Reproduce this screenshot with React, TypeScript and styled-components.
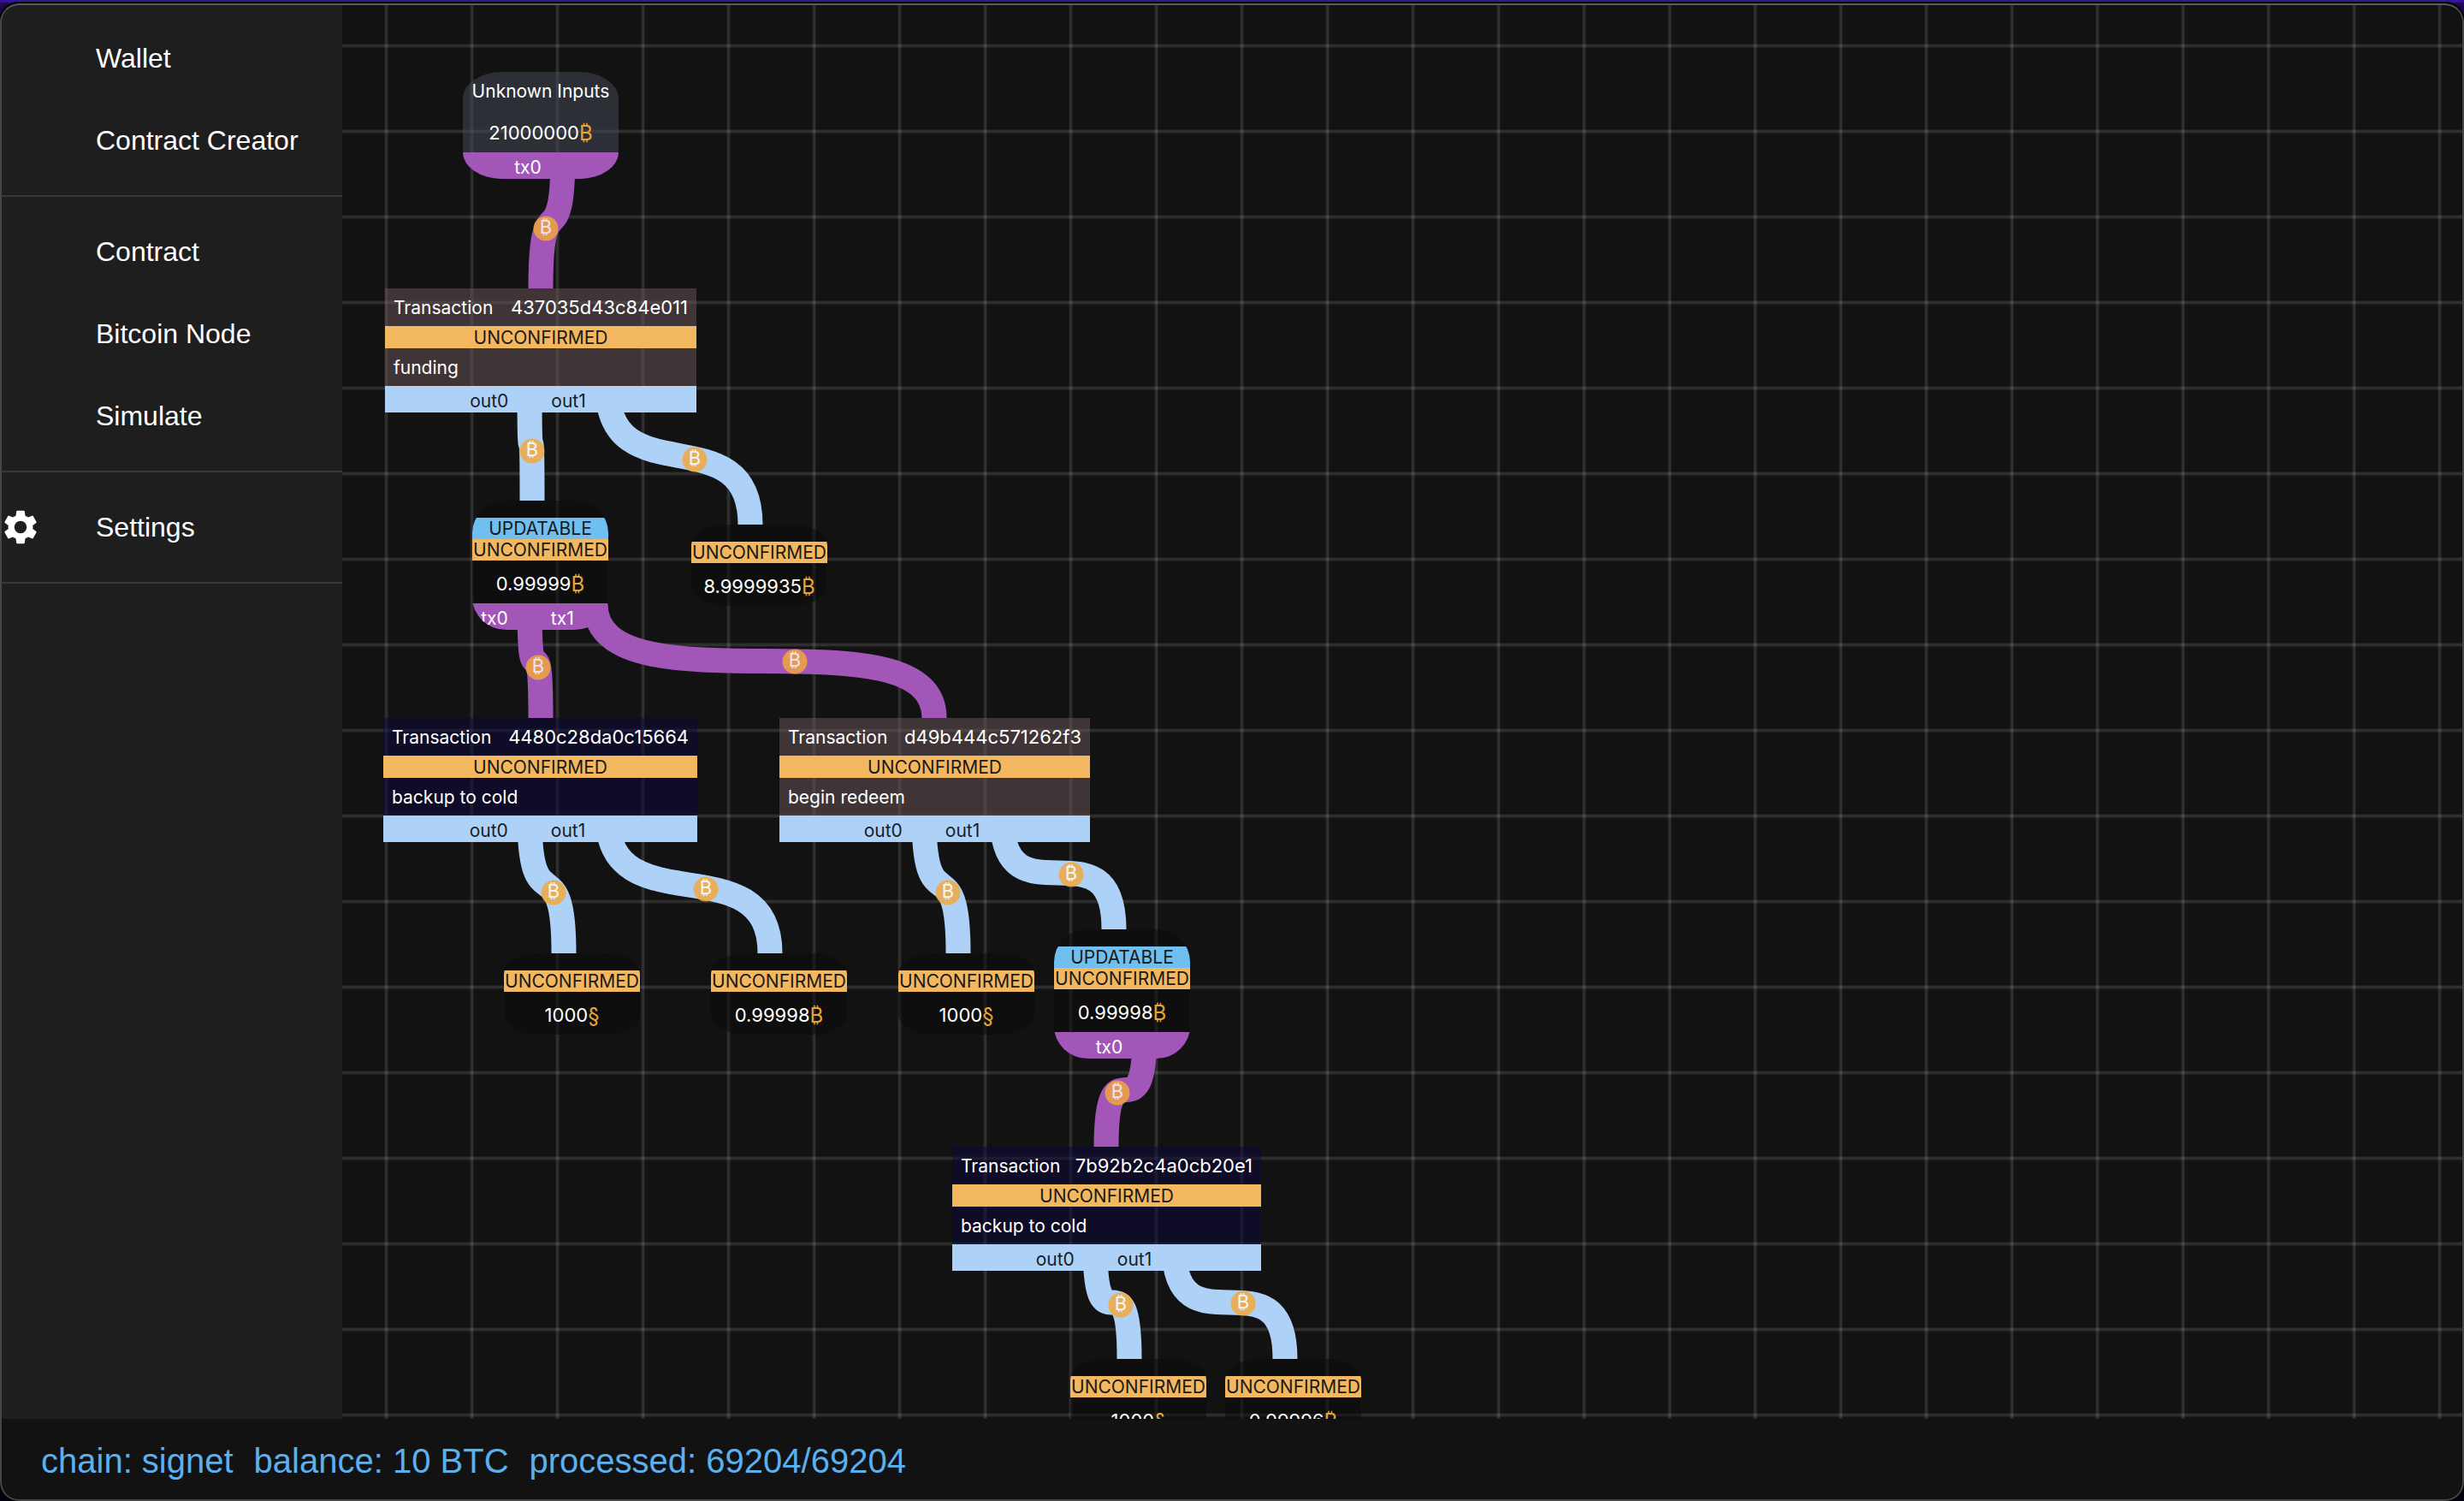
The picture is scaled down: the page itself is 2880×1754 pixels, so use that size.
import React from "react";
import styled, { createGlobalStyle } from "styled-components";
import { MdSettings } from "react-icons/md";

const GlobalStyle = createGlobalStyle`
  *, *::before, *::after { box-sizing: border-box; }
  html, body, #root { height: 100%; }
  body {
    margin: 0;
    overflow: hidden;
    background: linear-gradient(#35149a 0, #35149a 2px, #20084f 4px, #020010 100%);
    font-family: "Liberation Sans", Arial, Helvetica, sans-serif;
  }
`;

const Desktop = styled.div`
  height: 100%;
  padding-top: 4px;
`;

const Window = styled.div`
  position: relative;
  display: flex;
  flex-direction: column;
  height: 100%;
  overflow: hidden;
  border-radius: 22px;
  background: #121212;
  box-shadow: 0 0 0 2px #000;

  &::after {
    content: "";
    position: absolute;
    inset: 0;
    border: 2px solid #464646;
    border-top-color: #5c5c5c;
    border-radius: 22px;
    pointer-events: none;
  }
`;

const Workspace = styled.div`
  display: flex;
  flex: 1;
  min-height: 0;
`;

const Sidebar = styled.nav`
  flex: 0 0 400px;
  background: #1e1e1e;
`;

const NavList = styled.ul`
  margin: 0;
  padding: 16px 0;
  list-style: none;
  border-bottom: 2px solid #383838;
`;

const NavButton = styled.button`
  display: flex;
  align-items: center;
  width: 100%;
  height: 96px;
  padding: 0;
  border: 0;
  background: none;
  color: #fff;
  font: inherit;
  font-size: 32px;
  line-height: 48px;
  text-align: left;
  cursor: pointer;
`;

const NavIcon = styled.span`
  display: flex;
  flex: 0 0 112px;
  font-size: 48px;
`;

const Canvas = styled.main`
  position: relative;
  flex: 1;
  overflow: hidden;
  font-family: Inter, "Noto Sans", sans-serif;
  font-size: 21px;
  line-height: 25px;
  color: #fff;
  background-color: #121212;
  background-image:
    linear-gradient(90deg, #ffffff0c 1px, #ffffff1e 1px 4px, #ffffff0c 4px 5px, transparent 5px),
    linear-gradient(#ffffff0c 1px, #ffffff1e 1px 4px, #ffffff0c 4px 5px, transparent 5px);
  background-size: 100px 100px;
  background-position: 49px 0, 0 47px;
`;

const NodeBox = styled.div<{ $x: number; $y: number; $w: number }>`
  position: absolute;
  left: ${(p) => p.$x}px;
  top: ${(p) => p.$y}px;
  width: ${(p) => p.$w}px;
  white-space: nowrap;
`;

const TransactionBox = styled(NodeBox)<{ $tone: string }>`
  background: ${(p) => p.$tone};
`;

const CoinBox = styled(NodeBox)<{ $tone: string }>`
  overflow: hidden;
  border-radius: 25%;
  background: ${(p) => p.$tone};
`;

const NodeRow = styled.div`
  display: flex;
  align-items: center;
  justify-content: space-between;
  height: 44px;
  padding: 0 10px;
`;

const Hash = styled.span`
  font-size: 22px;
`;

const CoinCap = styled.div`
  display: flex;
  align-items: center;
  justify-content: center;
  min-height: 20px;
`;

const CoinTitle = styled(CoinCap)`
  height: 44px;
`;

const Status = styled.div<{ $kind: "unconfirmed" | "updatable" }>`
  display: flex;
  justify-content: center;
  height: 25px;
  color: #1c1a17;
  background: ${(p) => (p.$kind === "updatable" ? "#70bff1" : "#f3b85f")};
`;

const TransactionStatus = styled(Status)`
  align-items: center;
  height: 26px;
`;

const Amount = styled.div`
  display: flex;
  align-items: center;
  justify-content: center;
  height: 50px;
  padding-top: 4px;
  font-size: 22px;
`;

const Unit = styled.span`
  color: #e6a535;
  font-size: 24px;
`;

const PortBar = styled.div<{ $kind: "in" | "out" }>`
  display: flex;
  align-items: center;
  justify-content: center;
  height: 31px;
  padding-top: 4px;
  color: ${(p) => (p.$kind === "out" ? "#16202a" : "#fff")};
  background: ${(p) => (p.$kind === "out" ? "#aed2f7" : "#a256b8")};
`;

const Port = styled.span`
  flex: none;
  padding: 0 40px 0 10px;
`;

const Links = styled.svg`
  position: absolute;
  inset: 0;
  width: 100%;
  height: 100%;
  pointer-events: none;
`;

const StatusBar = styled.footer`
  display: flex;
  align-items: center;
  gap: 24px;
  height: 96px;
  padding: 2px 48px 0;
  color: #5bb0ee;
  background: #121212;
  font-size: 40px;
  line-height: 48px;
`;

const BROWN = "#6c585a80";
const NAVY = "#0a063c80";
const SLATE = "#464e5a80";
const BLACK = "#0a0a0a80";

interface Transaction {
  x: number;
  y: number;
  w: number;
  hash: string;
  name: string;
  tone: string;
}

interface Coin {
  x: number;
  y: number;
  amount: string;
  unit: string;
  updatable?: boolean;
  spends?: string[];
}

interface Link {
  kind: "in" | "out";
  from: [number, number];
  to: [number, number];
  badge: [number, number];
}

const transactions: Transaction[] = [
  { x: 50, y: 333, w: 364, hash: "437035d43c84e011", name: "funding", tone: BROWN },
  { x: 48, y: 835, w: 367, hash: "4480c28da0c15664", name: "backup to cold", tone: NAVY },
  { x: 511, y: 835, w: 363, hash: "d49b444c571262f3", name: "begin redeem", tone: BROWN },
  { x: 713, y: 1336, w: 361, hash: "7b92b2c4a0cb20e1", name: "backup to cold", tone: NAVY },
];

const coins: Coin[] = [
  { x: 152, y: 581, amount: "0.99999", unit: "₿", updatable: true, spends: ["tx0", "tx1"] },
  { x: 408, y: 609, amount: "8.9999935", unit: "₿" },
  { x: 189, y: 1110, amount: "1000", unit: "§" },
  { x: 431, y: 1110, amount: "0.99998", unit: "₿" },
  { x: 650, y: 1110, amount: "1000", unit: "§" },
  { x: 832, y: 1082, amount: "0.99998", unit: "₿", updatable: true, spends: ["tx0"] },
  { x: 851, y: 1584, amount: "1000", unit: "§" },
  { x: 1032, y: 1584, amount: "0.99996", unit: "₿" },
];

const links: Link[] = [
  { kind: "in", from: [258, 175], to: [232, 333], badge: [238, 263] },
  { kind: "out", from: [219, 448], to: [222, 581], badge: [222, 523] },
  { kind: "out", from: [310, 448], to: [477, 609], badge: [412, 533] },
  { kind: "in", from: [219, 702], to: [232, 835], badge: [229, 776] },
  { kind: "in", from: [296, 702], to: [692, 835], badge: [529, 769] },
  { kind: "out", from: [219, 950], to: [259, 1110], badge: [247, 1039] },
  { kind: "out", from: [310, 950], to: [500, 1110], badge: [425, 1035] },
  { kind: "out", from: [680, 950], to: [720, 1110], badge: [708, 1039] },
  { kind: "out", from: [771, 950], to: [902, 1082], badge: [852, 1018] },
  { kind: "in", from: [938, 1203], to: [893, 1336], badge: [906, 1273] },
  { kind: "out", from: [880, 1452], to: [920, 1584], badge: [910, 1521] },
  { kind: "out", from: [972, 1452], to: [1102, 1584], badge: [1053, 1519] },
];

const PULL = 130;

function curve({ from, to }: Link) {
  return `M${from[0]} ${from[1]} C${from[0]} ${from[1] + PULL} ${to[0]} ${to[1] - PULL} ${to[0]} ${to[1]}`;
}

function Ports({ kind, names }: { kind: "in" | "out"; names: string[] }) {
  return (
    <PortBar $kind={kind}>
      {names.map((name) => (
        <Port key={name}>{name}</Port>
      ))}
    </PortBar>
  );
}

function TransactionNode({ x, y, w, hash, name, tone }: Transaction) {
  return (
    <TransactionBox $x={x} $y={y} $w={w} $tone={tone}>
      <NodeRow>
        <span>Transaction</span>
        <Hash>{hash}</Hash>
      </NodeRow>
      <TransactionStatus $kind="unconfirmed">UNCONFIRMED</TransactionStatus>
      <NodeRow>{name}</NodeRow>
      <Ports kind="out" names={["out0", "out1"]} />
    </TransactionBox>
  );
}

function CoinNode({ x, y, amount, unit, updatable, spends }: Coin) {
  return (
    <CoinBox $x={x} $y={y} $w={159} $tone={BLACK}>
      <CoinCap />
      {updatable && <Status $kind="updatable">UPDATABLE</Status>}
      <Status $kind="unconfirmed">UNCONFIRMED</Status>
      <Amount>
        {amount}
        <Unit>{unit}</Unit>
      </Amount>
      {spends && <Ports kind="in" names={spends} />}
    </CoinBox>
  );
}

function NavItem({ label, icon }: { label: string; icon?: React.ReactNode }) {
  return (
    <li>
      <NavButton type="button">
        <NavIcon>{icon}</NavIcon>
        {label}
      </NavButton>
    </li>
  );
}

export default function App() {
  return (
    <>
      <GlobalStyle />
      <Desktop>
        <Window>
          <Workspace>
            <Sidebar>
              <NavList>
                <NavItem label="Wallet" />
                <NavItem label="Contract Creator" />
              </NavList>
              <NavList>
                <NavItem label="Contract" />
                <NavItem label="Bitcoin Node" />
                <NavItem label="Simulate" />
              </NavList>
              <NavList>
                <NavItem label="Settings" icon={<MdSettings />} />
              </NavList>
            </Sidebar>
            <Canvas>
              <CoinBox $x={141} $y={80} $w={182} $tone={SLATE}>
                <CoinTitle>Unknown Inputs</CoinTitle>
                <Amount>
                  21000000<Unit>₿</Unit>
                </Amount>
                <Ports kind="in" names={["tx0"]} />
              </CoinBox>
              {transactions.map((t) => (
                <TransactionNode key={t.hash} {...t} />
              ))}
              {coins.map((c) => (
                <CoinNode key={`${c.x}-${c.y}`} {...c} />
              ))}
              <Links aria-hidden="true">
                {links.map((link) => (
                  <path
                    key={curve(link)}
                    d={curve(link)}
                    fill="none"
                    stroke={link.kind === "in" ? "#a256b8" : "#aed2f7"}
                    strokeWidth={29}
                  />
                ))}
                {links.map(({ badge: [x, y] }) => (
                  <g key={`${x}-${y}`} opacity={0.83}>
                    <circle cx={x} cy={y} r={14.5} fill="#f3a93b" />
                    <text x={x} y={y + 6} textAnchor="middle" fontSize={22} fill="#fff">
                      ₿
                    </text>
                  </g>
                ))}
              </Links>
            </Canvas>
          </Workspace>
          <StatusBar>
            <span>chain: signet</span>
            <span>balance: 10 BTC</span>
            <span>processed: 69204/69204</span>
          </StatusBar>
        </Window>
      </Desktop>
    </>
  );
}
